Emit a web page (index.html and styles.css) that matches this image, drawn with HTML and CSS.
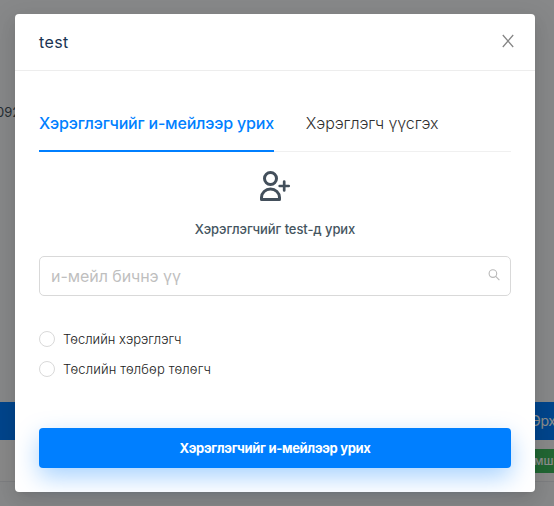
FILE: index.html
```html
<!DOCTYPE html>
<html lang="mn">
<head>
<meta charset="utf-8">
<title>test</title>
<link rel="stylesheet" href="styles.css">
</head>
<body>
<div class="page">
  <div class="page-date"><span>092</span></div>
  <div class="table-head"><span>Өрх</span></div>
  <div class="table-row"><span class="badge">мш</span></div>
</div>
<div class="mask">
  <section class="modal">
    <header class="modal-header">
      <h1 class="modal-title">test</h1>
      <svg class="close" viewBox="0 0 12 14" width="12" height="14" fill="none" stroke="#858585" stroke-width="1.25"><path d="M.8 1 11.2 13M11.2 1 .8 13"/></svg>
    </header>
    <div class="modal-body">
      <nav class="tabs">
        <a class="tab tab-active">Хэрэглэгчийг и-мейлээр урих</a>
        <a class="tab">Хэрэглэгч үүсгэх</a>
      </nav>
      <div class="intro">
        <svg class="user-add" viewBox="0 0 32 32" width="32" height="32" fill="none" stroke="#434f5b" stroke-width="3" stroke-linecap="round" stroke-linejoin="round"><circle cx="11.5" cy="8.5" r="6"/><path d="M2.5 29.5V27.5a9 8.5 0 0 1 18 0V29.5Z"/><path d="M20.7 16H29.7M25.2 11.5V20.5" stroke-width="2.7"/></svg>
        <p class="intro-text">Хэрэглэгчийг test-д урих</p>
      </div>
      <div class="search">
        <input class="search-input" type="text" placeholder="и-мейл бичнэ үү">
        <svg class="search-icon" viewBox="0 0 12 12" width="12" height="12" fill="none" stroke="#b8b8b8" stroke-width="1.1"><circle cx="4.9" cy="4.6" r="3.8"/><path d="M7.7 7.4 11.4 11.1"/></svg>
      </div>
      <div class="options">
        <label class="option"><span class="radio"></span><span class="option-text">Төслийн хэрэглэгч</span></label>
        <label class="option"><span class="radio"></span><span class="option-text option-text-wide">Төслийн төлбөр төлөгч</span></label>
      </div>
      <button class="submit">Хэрэглэгчийг и-мейлээр урих</button>
    </div>
  </section>
</div>
</body>
</html>
```
FILE: styles.css
```css
* { box-sizing: border-box; }
body {
  margin: 0;
  height: 506px;
  overflow: hidden;
  font-family: Inter, "Liberation Sans", sans-serif;
  color: #455560;
  background: #f6f7f9;
}
.page { height: 506px; display: flex; flex-direction: column; }
.page-date {
  height: 402px;
  padding-top: 104px;
  font-size: 13px;
  line-height: 17px;
}
.page-date span { margin-left: -4px; }
.table-head {
  height: 38px;
  background: #007fff;
  color: #fff;
  font-size: 14px;
  line-height: 38px;
  padding-left: 530px;
  letter-spacing: -.3px;
  white-space: nowrap;
}
.table-row {
  height: 42px;
  padding: 9px 0 0 515px;
  background: #fafafa;
  border-bottom: 1px solid #e3e6ec;
}
.badge {
  display: block;
  height: 24px;
  padding-left: 19px;
  background: #3cba5e;
  color: #fff;
  font-size: 12px;
  font-weight: 500;
  line-height: 24px;
  white-space: nowrap;
  overflow: hidden;
}
.mask {
  position: absolute;
  inset: 0;
  padding: 14px 19px 14px 15px;
  background: rgba(0, 0, 0, .45);
}
.modal {
  height: 478px;
  border-radius: 4px;
  background: #fff;
  box-shadow: 0 3px 6px -4px rgba(0, 0, 0, .12), 0 6px 16px rgba(0, 0, 0, .08), 0 9px 28px 8px rgba(0, 0, 0, .05);
}
.modal-header {
  height: 57px;
  display: flex;
  align-items: center;
  justify-content: space-between;
  padding: 0 21px 0 24px;
  border-bottom: 1px solid #ededed;
}
.modal-title {
  margin: 0;
  font-size: 16px;
  font-weight: 400;
  line-height: 24px;
  letter-spacing: .4px;
  color: #1a3353;
}
.close { margin-top: -2px; }
.modal-body { padding: 24px; }
.tabs {
  display: flex;
  gap: 32px;
  height: 57px;
  box-shadow: inset 0 -1px #f0f0f0;
}
.tab {
  padding-top: 16px;
  font-size: 16px;
  font-weight: 300;
  line-height: 24px;
  letter-spacing: -.09px;
  color: #303030;
  white-space: nowrap;
}
.tab-active {
  font-weight: 500;
  letter-spacing: -.19px;
  color: #007fff;
  border-bottom: 2px solid #007fff;
}
.intro { text-align: center; padding-top: 18px; }
.user-add { display: block; margin: 0 auto; }
.intro-text {
  margin: 17px 0 0;
  font-size: 13px;
  font-weight: 500;
  line-height: 20px;
  letter-spacing: -.08px;
}
.search {
  display: flex;
  align-items: center;
  height: 40px;
  margin-top: 17px;
  padding: 0 10px 0 11px;
  border: 1px solid #d9d9d9;
  border-radius: 5px;
}
.search-input {
  flex: 1;
  min-width: 0;
  padding: 0;
  border: 0;
  outline: 0;
  background: none;
  font: 400 16px/24px Inter, sans-serif;
  letter-spacing: -.06px;
}
.search-input::placeholder { color: #bfbfbf; }
.search-icon { margin-top: -2px; }
.options {
  display: grid;
  gap: 10px;
  margin-top: 33px;
}
.option {
  display: flex;
  align-items: center;
  gap: 8px;
  height: 20px;
  font-size: 13px;
  font-weight: 300;
  color: #222;
}
.option-text-wide { letter-spacing: .15px; }
.radio {
  width: 16px;
  height: 16px;
  border: 1px solid #d9d9d9;
  border-radius: 50%;
}
.submit {
  display: block;
  width: 100%;
  height: 40px;
  margin-top: 49px;
  padding: 0;
  border: 0;
  border-radius: 4px;
  background: #007fff;
  color: #fff;
  font: 700 13px/20px Inter, sans-serif;
  letter-spacing: -.32px;
  box-shadow: 0 9px 24px rgba(0, 127, 255, .35);
}
```
